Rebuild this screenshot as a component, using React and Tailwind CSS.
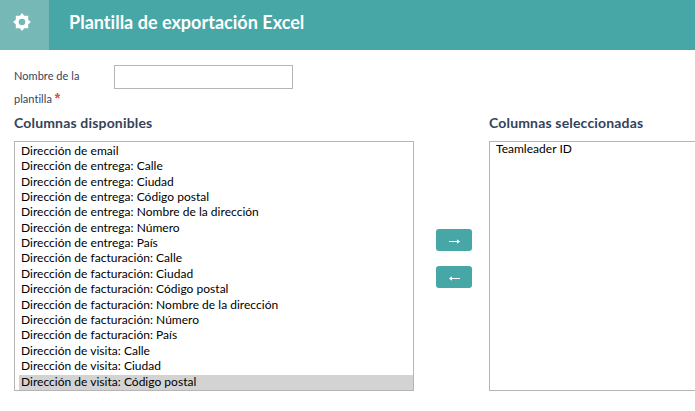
import React from "react";

const availableColumns = [
  "Dirección de email",
  "Dirección de entrega: Calle",
  "Dirección de entrega: Ciudad",
  "Dirección de entrega: Código postal",
  "Dirección de entrega: Nombre de la dirección",
  "Dirección de entrega: Número",
  "Dirección de entrega: País",
  "Dirección de facturación: Calle",
  "Dirección de facturación: Ciudad",
  "Dirección de facturación: Código postal",
  "Dirección de facturación: Nombre de la dirección",
  "Dirección de facturación: Número",
  "Dirección de facturación: País",
  "Dirección de visita: Calle",
  "Dirección de visita: Ciudad",
  "Dirección de visita: Código postal",
];

const selectedColumns = ["Teamleader ID"];

function GearIcon() {
  return (
    <svg className="h-[18px] w-[18px]" viewBox="-9 -9 18 18" fill="white">
      <path
        fillRule="evenodd"
        d="M-2.2-6.2 0-8.9 2.2-6.2 6.2-6.3 6.2-2.2 8.9 0 6.2 2.2 6.2 6.3 2.2 6.2 0 8.9-2.2 6.2-6.2 6.3-6.2 2.2-8.9 0-6.2-2.2-6.2-6.3ZM0-3.3A3.3 3.3 0 1 0 0 3.3 3.3 3.3 0 1 0 0-3.3Z"
      />
    </svg>
  );
}

function MoveButton({ label, children }) {
  return (
    <button aria-label={label} className="flex h-[22px] w-9 items-center justify-center rounded-[3px] bg-[#47a6a6]">
      <svg className="mt-[2px] h-[7px] w-[11px]" viewBox="0 0 11 7" fill="white">
        {children}
      </svg>
    </button>
  );
}

export default function App() {
  return (
    <div className="h-[411px] w-[695px] overflow-hidden bg-white font-['Lato',sans-serif] text-[#34435a]">
      <header className="flex h-[50px] bg-[#47a6a6]">
        <div className="flex w-[49px] items-center bg-[#75b8b5] pb-[6px] pl-[12.5px]">
          <GearIcon />
        </div>
        <h1 className="pt-[10px] pl-5 text-[18px] leading-6 font-bold tracking-[0.02px] whitespace-nowrap text-white">
          Plantilla de exportación Excel
        </h1>
      </header>

      <div className="flex h-[65px] pt-[15px] pl-[14px]">
        <label className="-mt-px w-[100px] text-[11px] leading-[23px] tracking-[0.04px]">
          Nombre de la
          <br />
          plantilla{" "}
          <span className="font-['Liberation_Sans',sans-serif] text-[14px] leading-none font-bold text-[#e04f3f]">
            *
          </span>
        </label>
        <input className="h-6 w-[179px] border border-[#b5b5b5] bg-white outline-none" />
      </div>

      <div className="flex pl-[14px]">
        <section className="w-[400px] shrink-0">
          <h2 className="-mt-px h-[27px] text-[14px] leading-[18px] font-bold tracking-[0.17px]">
            Columnas disponibles
          </h2>
          <ul className="flex h-[250px] flex-col justify-end border border-[#b5b5b5] pl-1 text-[12px] tracking-[0.02px] text-black">
            {availableColumns.map((name, index) => (
              <li
                key={name}
                className={`h-[15.4px] pl-[2px] leading-[14px] whitespace-nowrap ${
                  index === availableColumns.length - 1 ? "bg-[#d3d3d3]" : ""
                }`}
              >
                {name}
              </li>
            ))}
          </ul>
        </section>

        <div className="flex w-[75px] shrink-0 flex-col gap-[15px] pt-[114px] pl-[22px]">
          <MoveButton label="Añadir">
            <path d="M0 3h8V1.3l3 2.2-3 2.2V4H0Z" />
          </MoveButton>
          <MoveButton label="Quitar">
            <path d="M11 3H3V1.3L0 3.5l3 2.2V4h8Z" />
          </MoveButton>
        </div>

        <section className="w-[400px] shrink-0">
          <h2 className="-mt-px h-[27px] text-[14px] leading-[18px] font-bold tracking-[0.17px]">
            Columnas seleccionadas
          </h2>
          <ul className="h-[250px] border border-[#b5b5b5] pl-[6px] text-[12px] tracking-[0.02px] text-black">
            {selectedColumns.map((name) => (
              <li key={name} className="leading-[14px]">
                {name}
              </li>
            ))}
          </ul>
        </section>
      </div>
    </div>
  );
}
